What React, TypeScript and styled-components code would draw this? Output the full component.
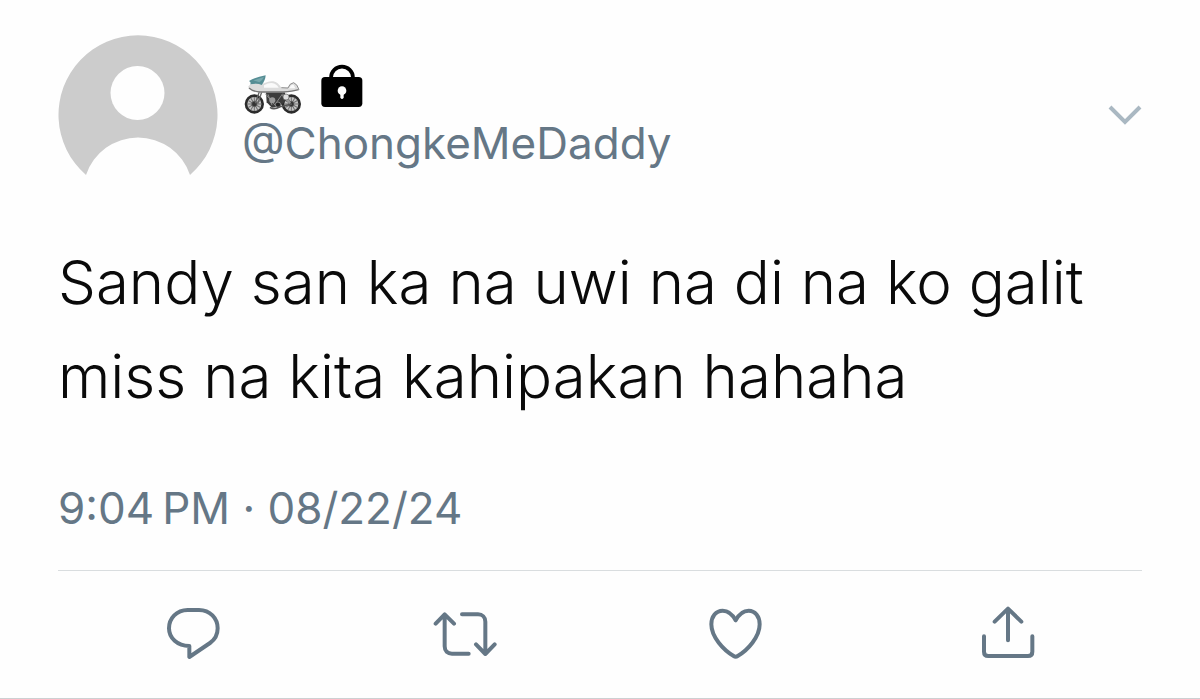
import React from "react";
import styled, { createGlobalStyle } from "styled-components";

const GlobalStyle = createGlobalStyle`
  * { box-sizing: border-box; }
  body {
    margin: 0;
    background: #fefefe;
    color: #0a0a0a;
    font-family: Inter, "Liberation Sans", sans-serif;
  }
`;

const Tweet = styled.article`
  padding: 35px 58px 0;
  border-bottom: 1px solid #ccd0d2;
`;

const Header = styled.header`
  display: flex;
  align-items: flex-start;
  gap: 24px;
`;

const Avatar = styled.svg`
  flex: none;
  width: 160px;
  height: 160px;
`;

const Author = styled.div`
  flex: 1;
  min-width: 0;
  padding-top: 29px;
`;

const Name = styled.div`
  display: flex;
  align-items: flex-end;
  gap: 19px;
  height: 51px;
`;

const Motorcycle = styled.svg`
  width: 60px;
  height: 50px;
`;

const Padlock = styled.svg`
  width: 42px;
  height: 50px;
  overflow: visible;
`;

const Handle = styled.a`
  display: block;
  color: #657786;
  font-size: 44px;
  line-height: 56px;
  text-decoration: none;
`;

const IconButton = styled.button`
  display: flex;
  padding: 0;
  border: 0;
  background: none;
  color: #657786;
  cursor: pointer;
`;

const MenuButton = styled(IconButton)`
  margin-top: 64px;
  color: #aab8c2;
`;

const Chevron = styled.svg`
  width: 34px;
  height: 32px;
`;

const Body = styled.p`
  margin: 40px 0 0;
  font-size: 60px;
  font-weight: 300;
  line-height: 94px;
`;

const Timestamp = styled.time`
  display: block;
  margin-top: 57px;
  color: #657786;
  font-size: 44px;
  line-height: 56px;
`;

const Actions = styled.footer`
  display: grid;
  grid-template-columns: repeat(4, 1fr);
  justify-items: center;
  margin-top: 34px;
  padding: 31px 0 32px;
  border-top: 1px solid #d9dddf;
`;

const ActionSvg = styled.svg`
  width: 64px;
  height: 64px;
  fill: none;
  stroke: currentColor;
  stroke-width: 12;
  stroke-linecap: round;
  stroke-linejoin: round;
`;

const actions = [
  {
    label: "Reply",
    path: "M77 24H111C144 24 167 49 167 79C167 99 157 114 144 123L82 165V132C46 132 21 108 21 79C21 49 44 24 77 24Z",
  },
  {
    label: "Retweet",
    path: "M8 65L35 37L63 65M35 38V133C35 147 44 155 57 155H107M87 37H135C148 37 157 46 157 59V156M129 127L157 156L185 127",
  },
  {
    label: "Like",
    path: "M95 55C85 36 71 26 56 26C36 26 22 43 22 67C22 105 59 145 89 162Q95 166 101 162C131 145 167 105 167 67C167 43 153 26 134 26C119 26 105 36 95 55Z",
  },
  {
    label: "Share",
    path: "M59 59L99 20L139 59M99 20V115M27 103V149Q27 162 40 162H159Q172 162 172 149V103",
  },
];

const spokes = [0, 30, 60, 90, 120, 150];

function Wheel({ cx }: { cx: number }) {
  return (
    <g fill="none">
      <circle cx={cx} cy="111" r="25" fill="#c4c4c4" stroke="#2b2b2b" strokeWidth="8" />
      {spokes.map((a) => (
        <path
          key={a}
          d={`M${cx - 21} 111H${cx + 21}`}
          stroke="#707070"
          strokeWidth="3"
          transform={`rotate(${a} ${cx} 111)`}
        />
      ))}
      <circle cx={cx} cy="111" r="8" fill="#333" stroke="#666" strokeWidth="2" />
    </g>
  );
}

export default function App() {
  return (
    <>
      <GlobalStyle />
      <Tweet>
        <Header>
          <Avatar viewBox="0 0 160 160" role="img" aria-label="Profile picture">
            <path
              d="M28 140A79.5 79.5 0 1 1 132 140A54.8 54.8 0 0 0 28 140Z"
              fill="#ccc"
            />
            <circle cx="79.5" cy="58" r="27" fill="#fefefe" />
          </Avatar>
          <Author>
            <Name>
              <Motorcycle viewBox="0 -6 180 150" role="img" aria-label="Motorcycle">
                <Wheel cx={37} />
                <Wheel cx={148} />
                <path d="M52 74L40 109M59 76L47 110" stroke="#666" strokeWidth="4" />
                <path d="M72 76H128L135 97L114 118L90 122L74 106Z" fill="#3c3c3c" />
                <path d="M78 82L90 114M70 80L104 120M122 80L98 114" stroke="#8a8a8a" strokeWidth="3" />
                <circle cx="91" cy="100" r="9" fill="#9a9a9a" />
                <circle cx="108" cy="113" r="8" fill="#222" stroke="#888" strokeWidth="3" />
                <path d="M84 121Q96 130 114 119L150 111" fill="none" stroke="#555" strokeWidth="5" />
                <path d="M122 84L145 109" stroke="#999" strokeWidth="6" />
                <circle cx="132" cy="90" r="9" fill="#dedede" stroke="#666" strokeWidth="2" />
                <path
                  d="M18 60Q24 50 36 49L58 52L70 47Q82 41 94 43Q108 46 118 62L138 63Q142 49 155 47Q166 51 171 68Q153 73 123 76L54 76Q28 74 18 60Z"
                  fill="#dcdcdc"
                />
                <path d="M66 55Q84 44 98 50Q107 55 110 62H66Z" fill="#fafafa" />
                <path d="M21 63Q32 74 56 75L123 75Q152 73 170 68" fill="none" stroke="#777" strokeWidth="4" />
                <path d="M118 62L138 63Q142 49 155 47Q166 51 171 68" fill="none" stroke="#8b8b8b" strokeWidth="3" />
                <path d="M144 60Q149 51 155 54L160 64H141Z" fill="#fafafa" />
                <path d="M21 42Q38 31 71 25Q70 41 59 54Q47 47 24 52Q29 46 21 42Z" fill="#558d94" />
                <path d="M34 40Q50 35 66 30Q60 42 52 46Z" fill="#78a8ad" />
              </Motorcycle>
              <Padlock viewBox="0 6 126 150" role="img" aria-label="Protected account">
                <path
                  d="M30 63V44A33 33 0 0 1 96 44V63"
                  fill="none"
                  stroke="#000"
                  strokeWidth="11"
                />
                <rect x="1" y="42" width="123" height="90" rx="11" fill="#000" />
                <circle cx="63" cy="83" r="13" fill="#fefefe" />
                <path d="M58 88H68V104Q63 112 58 104Z" fill="#fefefe" />
              </Padlock>
            </Name>
            <Handle href="#profile">@ChongkeMeDaddy</Handle>
          </Author>
          <MenuButton type="button" aria-label="More options">
            <Chevron viewBox="0 0 34 32">
              <path
                d="M2 8L17 23L32 8"
                fill="none"
                stroke="currentColor"
                strokeWidth="4"
              />
            </Chevron>
          </MenuButton>
        </Header>
        <Body>Sandy san ka na uwi na di na ko galit miss na kita kahipakan hahaha</Body>
        <Timestamp dateTime="2024-08-22T21:04">9:04{"\u202f"}PM · 08/22/24</Timestamp>
        <Actions>
          {actions.map(({ label, path }) => (
            <IconButton key={label} type="button" aria-label={label}>
              <ActionSvg viewBox="0 0 192 192">
                <path d={path} />
              </ActionSvg>
            </IconButton>
          ))}
        </Actions>
      </Tweet>
    </>
  );
}
